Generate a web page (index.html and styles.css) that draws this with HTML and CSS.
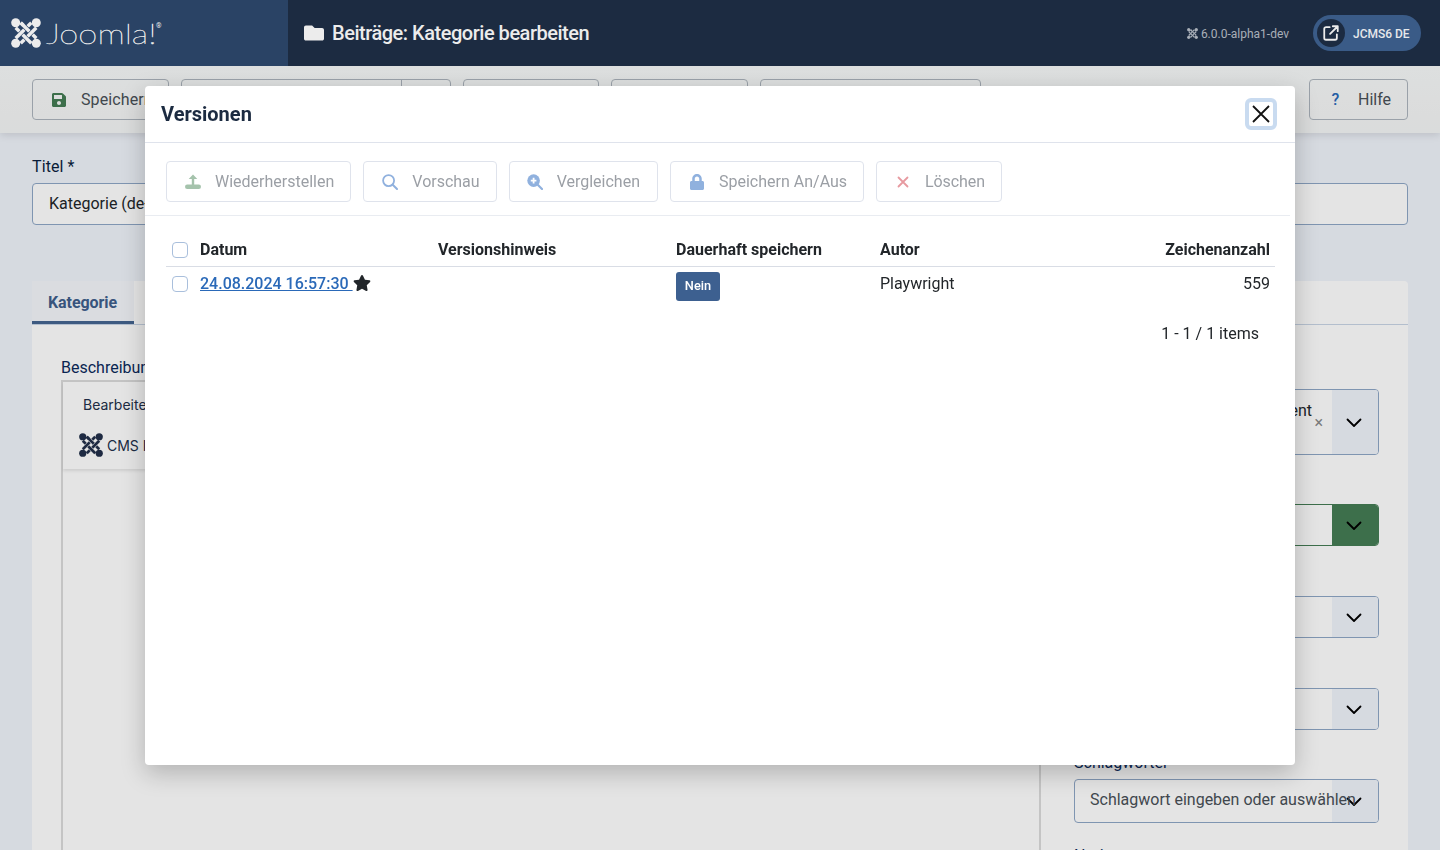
FILE: index.html
```html
<!DOCTYPE html>
<html lang="de">
<head>
<meta charset="utf-8">
<title>Beiträge: Kategorie bearbeiten</title>
<link rel="stylesheet" href="styles.css">
</head>
<body>
<svg class="defs" width="0" height="0" aria-hidden="true">
  <symbol id="joomla" viewBox="0 0 30 30">
    <g fill="none">
      <path class="gap" d="M9.700 4.700 25.300 20.300"/><path class="band" d="M9.700 4.700 25.300 20.300"/>
      <path class="gap" d="M25.300 9.700 9.700 25.300"/><path class="band" d="M25.300 9.700 9.700 25.300"/>
      <path class="gap" d="M4.700 9.700 20.300 25.300"/><path class="band" d="M4.700 9.700 20.300 25.300"/>
      <path class="gap" d="M20.300 4.700 4.700 20.300"/><path class="band" d="M20.300 4.700 4.700 20.300"/>
      <path class="gap" d="M12.500 7.500 17.500 12.500"/><path class="band" d="M9.700 4.700 18 13"/>
    </g>
    <g fill="currentColor">
      <circle cx="4.700" cy="4.700" r="4.500"/><circle cx="25.300" cy="4.700" r="4.500"/>
      <circle cx="4.700" cy="25.300" r="4.500"/><circle cx="25.300" cy="25.300" r="4.500"/>
    </g>
  </symbol>
  <symbol id="chev" viewBox="0 0 16 16">
    <path d="M1.500 4.500 8 11l6.500-6.500" fill="none" stroke="currentColor" stroke-width="1.800" stroke-linecap="round" stroke-linejoin="round"/>
  </symbol>
</svg>

<div class="page">
  <header class="topbar">
    <div class="brand">
      <svg class="brand-mark"><use href="#joomla"/></svg>
      <span class="brand-word">Joomla!</span><sup class="brand-reg">®</sup>
    </div>
    <div class="titlebar">
      <svg class="folder" viewBox="0 0 512 512"><path fill="currentColor" d="M464 128H272l-64-64H48C21.490 64 0 85.490 0 112v288c0 26.510 21.490 48 48 48h416c26.510 0 48-21.490 48-48V176c0-26.510-21.490-48-48-48z"/></svg>
      <h1>Beiträge: Kategorie bearbeiten</h1>
    </div>
    <div class="status">
      <span class="version"><svg class="version-mark"><use href="#joomla"/></svg>6.0.0-alpha1-dev</span>
      <span class="site-pill">
        <span class="site-icon">
          <svg viewBox="0 0 20 20" width="20" height="20" fill="none" stroke="currentColor" stroke-width="2" stroke-linecap="round" stroke-linejoin="round"><path d="M8.500 3.500H4.500a2 2 0 0 0-2 2v10a2 2 0 0 0 2 2h10a2 2 0 0 0 2-2v-4"/><path d="M9 11 17.500 2.500M12 2.500h5.500V8"/></svg>
        </span>
        <span class="site-name">JCMS6 DE</span>
      </span>
    </div>
  </header>

  <nav class="toolbar">
    <button class="tbtn tbtn-save"><svg class="save" viewBox="0 0 448 512"><path fill="currentColor" d="M433.941 129.941l-83.882-83.882A48 48 0 0 0 316.118 32H48C21.490 32 0 53.490 0 80v352c0 26.510 21.490 48 48 48h352c26.510 0 48-21.490 48-48V163.882a48 48 0 0 0-14.059-33.941zM224 416c-35.346 0-64-28.654-64-64 0-35.346 28.654-64 64-64s64 28.654 64 64c0 35.346-28.654 64-64 64zm96-304.520V212c0 6.627-5.373 12-12 12H76c-6.627 0-12-5.373-12-12V108c0-6.627 5.373-12 12-12h228.520c3.183 0 6.235 1.264 8.485 3.515l3.480 3.480A11.996 11.996 0 0 1 320 111.480z"/></svg>Speichern</button>
    <div class="tbtn tbtn-split"><span class="split-main"></span><span class="split-arrow"></span></div>
    <button class="tbtn tbtn-c"></button>
    <button class="tbtn tbtn-d"></button>
    <button class="tbtn tbtn-e"></button>
    <button class="tbtn tbtn-help"><span class="help-mark">?</span>Hilfe</button>
  </nav>

  <main class="content">
    <label class="lbl-title">Titel *</label>
    <div class="title-input">Kategorie (de-DE)</div>
    <section class="panel">
      <div class="tabs"><span class="tab">Kategorie</span></div>
      <div class="panel-body">
        <div class="col-main">
          <label class="lbl">Beschreibung</label>
          <div class="editor">
            <div class="ed-toolbar">
              <div class="ed-menu">Bearbeiten</div>
              <div class="ed-cms"><svg class="ed-mark"><use href="#joomla"/></svg>CMS Inhalt</div>
            </div>
          </div>
        </div>
        <aside class="col-side">
          <div class="sel sel-tall"><span class="sel-text sel-tag">Parent<span class="tag-x">×</span></span><span class="sel-arrow"><svg><use href="#chev"/></svg></span></div>
          <div class="sel sel-green"><span class="sel-text"></span><span class="sel-arrow"><svg><use href="#chev"/></svg></span></div>
          <div class="sel sel-plain"><span class="sel-text"></span><span class="sel-arrow"><svg><use href="#chev"/></svg></span></div>
          <div class="sel sel-plain"><span class="sel-text"></span><span class="sel-arrow"><svg><use href="#chev"/></svg></span></div>
          <label class="lbl lbl-tags">Schlagwörter</label>
          <div class="sel sel-tags"><span class="sel-text">Schlagwort eingeben oder auswählen</span><span class="sel-arrow"><svg><use href="#chev"/></svg></span></div>
          <label class="lbl lbl-note">Notiz</label>
        </aside>
      </div>
    </section>
  </main>
</div>

<div class="backdrop"></div>

<div class="modal" role="dialog" aria-label="Versionen">
  <div class="modal-head">
    <h2>Versionen</h2>
    <button class="close" aria-label="Schließen"><svg viewBox="0 0 18 18" width="18" height="18"><path d="M1 1l16 16M17 1 1 17" stroke="currentColor" stroke-width="1.800" fill="none"/></svg></button>
  </div>
  <div class="modal-tools">
    <button class="mbtn"><svg class="mi mi-green" viewBox="0 0 16 16"><path fill="currentColor" d="M8 .5 12.300 5H9.200v6.500H6.800V5H3.700z"/><rect fill="currentColor" x="0" y="10.500" width="16" height="4.500" rx="2.200"/></svg>Wiederherstellen</button>
    <button class="mbtn"><svg class="mi mi-blue" viewBox="0 0 16 16"><circle cx="6.600" cy="6.600" r="5.500" fill="none" stroke="currentColor" stroke-width="1.800"/><path d="M10.700 10.700 15 15" stroke="currentColor" stroke-width="2" stroke-linecap="round"/></svg>Vorschau</button>
    <button class="mbtn mbtn-cmp"><svg class="mi mi-blue" viewBox="0 0 16 16"><circle cx="6.600" cy="6.600" r="6.300" fill="currentColor"/><path d="M10.700 10.700 15 15" stroke="currentColor" stroke-width="2.200" stroke-linecap="round"/><path d="M6.600 3.800v5.600M3.800 6.600h5.600" stroke="#fff" stroke-width="1.800"/></svg>Vergleichen</button>
    <button class="mbtn"><svg class="mi mi-blue" viewBox="0 0 448 512"><path fill="currentColor" d="M400 224h-24v-72C376 68.200 307.800 0 224 0S72 68.200 72 152v72H48c-26.500 0-48 21.500-48 48v192c0 26.500 21.500 48 48 48h352c26.500 0 48-21.500 48-48V272c0-26.500-21.500-48-48-48zm-104 0H152v-72c0-39.700 32.300-72 72-72s72 32.300 72 72v72z"/></svg>Speichern An/Aus</button>
    <button class="mbtn mbtn-del"><svg class="mi mi-red" viewBox="0 0 16 16"><path d="M3.500 3.500l9 9M12.500 3.500l-9 9" stroke="currentColor" stroke-width="1.800" stroke-linecap="round"/></svg>Löschen</button>
  </div>
  <div class="modal-body">
    <table class="versions">
      <thead>
        <tr>
          <th class="c-check"><span class="check"></span></th>
          <th class="c-date">Datum</th>
          <th class="c-note">Versionshinweis</th>
          <th class="c-keep">Dauerhaft speichern</th>
          <th class="c-author">Autor</th>
          <th class="c-count">Zeichenanzahl</th>
        </tr>
      </thead>
      <tbody>
        <tr>
          <td class="c-check"><span class="check"></span></td>
          <td class="c-date"><a href="#">24.08.2024 16:57:30 </a><svg class="star" viewBox="0 0 576 512"><path fill="currentColor" d="M259.300 17.800L194 150.200 47.900 171.500c-26.200 3.800-36.700 36.100-17.700 54.600l105.700 103-25 145.500c-4.500 26.300 23.200 46 46.400 33.700L288 439.600l130.700 68.700c23.200 12.200 50.900-7.400 46.400-33.700l-25-145.500 105.700-103c19-18.500 8.500-50.800-17.700-54.600L382 150.200 316.700 17.800c-11.700-23.600-45.600-23.900-57.400 0z"/></svg></td>
          <td></td>
          <td><span class="badge">Nein</span></td>
          <td>Playwright</td>
          <td class="c-count">559</td>
        </tr>
      </tbody>
    </table>
    <div class="pager">1 - 1 / 1 items</div>
  </div>
</div>
</body>
</html>
```

FILE: styles.css
```css
* { box-sizing: border-box; }
html, body { margin: 0; height: 100%; overflow: hidden; }
body { background: #f0f4fb; font-family: Roboto, "Liberation Sans", sans-serif; font-size: 16px; color: #22262a; }
.defs { display: block; height: 0; }
button { font: inherit; }

.page { height: 850px; overflow: hidden; display: flex; flex-direction: column; }

.topbar { position: relative; z-index: 5; flex: 0 0 66px; display: flex; align-items: center; background: #1c2b41; color: #fff; }
.brand { width: 288px; height: 66px; background: #2a4365; display: flex; align-items: center; padding-left: 11px; color: #ececec; --gap: #2a4365; }
.gap { stroke: var(--gap); stroke-width: 4.600; }
.band { stroke: currentColor; stroke-width: 3.400; }
.brand-mark { width: 30px; height: 30px; margin-right: 5px; }
.brand-word { font-family: Lato, "Liberation Sans", sans-serif; font-weight: 100; font-size: 27px; line-height: 1; transform: scaleX(1.280); transform-origin: left; width: 112px; -webkit-text-stroke: .4px #ececec; }
.brand-reg { font-size: 7px; align-self: flex-start; margin: 23px 0 0 -2px; line-height: 1; }
.titlebar { display: flex; align-items: center; padding-left: 16px; color: #ececec; flex: 1; }
.folder { width: 20px; height: 20px; margin-right: 8px; }
h1 { margin: 0; font-size: 20px; font-weight: 500; letter-spacing: -.48px; line-height: 1; }
.status { display: flex; align-items: center; padding-right: 19px; }
.version { display: flex; align-items: center; font-size: 12px; color: #a9afb8; margin-right: 24px; padding-top: 1px; --gap: #1c2b41; }
.version-mark { width: 11px; height: 11px; margin-right: 3px; }
.site-pill { display: flex; align-items: center; width: 108px; height: 36px; border-radius: 18px; background: #3a5b87; padding-left: 4px; }
.site-icon { width: 28px; height: 28px; border-radius: 50%; background: #1c2b41; display: flex; align-items: center; justify-content: center; color: #ececec; }
.site-icon svg { width: 18px; height: 18px; }
.site-name { font-size: 12px; font-weight: 500; margin-left: 8px; padding-top: 1px; color: #e6e8eb; letter-spacing: -.03px; }

.toolbar { position: relative; flex: 0 0 67px; display: flex; gap: 12px; padding: 13px 32px 0; background: linear-gradient(#f8fafa, #f4f6f6); box-shadow: 0 2px 8px rgba(0,0,0,.12); }
.tbtn { height: 41px; border: 1px solid #adb5bd; border-radius: 4px; background: transparent; color: #495057; padding: 0; display: flex; align-items: center; font-size: 16px; overflow: hidden; white-space: nowrap; }
.tbtn-save { width: 137px; padding-left: 19px; letter-spacing: .1px; }
.save { width: 14px; height: 16px; color: #457d54; margin-right: 15px; }
.tbtn-split { width: 270px; }
.split-main { flex: 1; height: 100%; border-right: 1px solid #adb5bd; }
.split-arrow { width: 48px; }
.tbtn-c { width: 136px; }
.tbtn-d { width: 137px; }
.tbtn-e { width: 221px; }
.tbtn-help { width: 99px; margin-left: auto; padding-left: 20px; }
.help-mark { color: #2a69b8; font-weight: 500; width: 11px; margin-right: 17px; }

.content { flex: 1; min-height: 0; padding: 24px 32px 0; }
.lbl-title { display: block; font-size: 16px; line-height: 19px; color: #0b1f3f; letter-spacing: .1px; }
.title-input { height: 42px; margin-top: 7px; border: 1px solid #8ea7c6; border-radius: 4px; background: #fff; padding: 0 16px 2px; display: flex; align-items: center; color: #22262a; }

.panel { margin-top: 56px; background: #fff; height: 700px; border-radius: 4px 4px 0 0; }
.tabs { height: 44px; border-bottom: 1px solid #c9d5e6; }
.tab { display: flex; width: 102px; height: 43px; align-items: center; justify-content: center; background: #f4f7fb; border-bottom: 3px solid #456591; color: #3f5f8c; font-weight: 700; font-size: 16px; letter-spacing: -.08px; padding: 3px 1px 0 0; }
.panel-body { display: flex; padding: 33px 29px 0; gap: 33px; }
.col-main { width: 980px; }
.lbl { display: block; color: #0b2a5b; font-size: 16px; line-height: 19px; }
.editor { margin-top: 3px; height: 640px; border: 2px solid #dcdcdc; }
.ed-toolbar { height: 87px; box-shadow: 0 2px 3px rgba(0,0,0,.1); font-family: Inter, "Liberation Sans", sans-serif; font-size: 14px; color: #22304a; padding: 14px 0 0 20px; }
.ed-menu { line-height: 17px; }
.ed-cms { display: flex; align-items: center; margin: 20px 0 0 -4px; --gap: #fff; color: #22304a; }
.ed-mark { width: 24px; height: 24px; margin-right: 4px; }

.col-side { width: 305px; padding-top: 31px; flex: none; }
.sel { display: flex; border: 1px solid #8ea7c6; border-radius: 4px; background: #fff; overflow: hidden; }
.sel-text { flex: 1; min-width: 0; padding: 0 16px; display: flex; align-items: center; color: #495057; white-space: nowrap; }
.sel-arrow { flex: 0 0 46px; background: #f0f4fb; display: flex; align-items: center; justify-content: center; color: #000; padding: 1px 2px 0 0; }
.sel-arrow svg { width: 16px; height: 16px; }
.sel-tall { height: 66px; }
.sel-tag { justify-content: flex-end; padding: 11px 20px 0 0; color: #22262a; position: relative; align-items: flex-start; }
.tag-x { position: absolute; right: 9px; top: 26px; color: #8a8a8a; font-size: 16px; line-height: 14px; }
.sel-green { height: 42px; margin-top: 49px; border-color: #457d54; }
.sel-green .sel-arrow { background: #457d54; }
.sel-plain { height: 42px; margin-top: 50px; }
.lbl-tags { margin-top: 23px; }
.sel-tags { height: 44px; margin-top: 7px; overflow: visible; }
.sel-tags .sel-text { position: relative; z-index: 1; padding: 0 0 4px 15px; }
.sel-tags .sel-arrow { border-radius: 0 3px 3px 0; }
.lbl-note { margin-top: 23px; }

.backdrop { position: fixed; inset: 0; z-index: 3; background: rgba(0,0,0,.105); }

.modal { position: fixed; z-index: 10; left: 145px; top: 86px; width: 1150px; height: 679px; background: #fff; border-radius: 4px; box-shadow: 0 8px 24px rgba(0,0,0,.22); display: flex; flex-direction: column; }
.modal-head { flex: 0 0 57px; display: flex; align-items: center; justify-content: space-between; padding: 0 18px 0 16px; border-bottom: 1px solid #dfe3ec; }
h2 { margin: 0; font-size: 20px; font-weight: 700; color: #1c2b41; }
.close { width: 32px; height: 32px; border: 4px solid #c9dbf0; border-radius: 6px; background: #fff; padding: 0; display: flex; align-items: center; justify-content: center; color: #111; }
.modal-tools { flex: 0 0 72px; display: flex; gap: 12px; padding: 18px 21px 0; }
.mbtn { height: 41px; padding: 0 16px 0 18px; border: 1px solid #dfe3ec; border-radius: 4px; background: #fff; color: #9b9fa5; display: flex; align-items: center; font-size: 16px; white-space: nowrap; }
.mbtn-del { letter-spacing: -.1px; }
.mbtn-cmp { padding-left: 17px; padding-right: 17px; }
.mi { width: 16px; height: 16px; margin-right: 14px; flex: none; }
.mi-green { color: #a5c3ac; }
.mi-blue { color: #90b1de; }
.mi-red { color: #e79aa0; }
.modal-body { border-top: 1px solid #e9ecf1; margin: 0 5px 0 0; flex: 1; padding: 19px 0 0 21px; }
.versions { width: 1109px; table-layout: fixed; border-collapse: collapse; font-size: 16px; color: #22262a; }
.versions th { font-weight: 700; text-align: left; height: 31px; padding: 0 4px 2px; border-bottom: 1px solid #d9dde5; }
.versions td { vertical-align: top; padding: 7px 4px 0; line-height: 20px; height: 47px; }
.c-check { width: 30px; padding-left: 6px !important; padding-right: 0 !important; }
.c-date { width: 238px; }
.c-note { width: 238px; }
.c-keep { width: 204px; }
.c-author { width: 204px; }
.versions .c-count { text-align: right; padding-right: 5px; }
.check { display: block; width: 16px; height: 16px; border: 1px solid #a9bfdc; border-radius: 4px; background: #fff; margin-top: 2px; }
a { color: #2a69b8; font-weight: 500; }
.star { width: 18px; height: 16px; color: #22262a; vertical-align: -2px; }
.badge { display: inline-block; margin-top: -2px; width: 44px; height: 29px; border-radius: 3px; background: #3d6090; color: #fff; font-size: 12.800px; font-weight: 500; line-height: 27px; text-align: center; }
.pager { width: 1093px; text-align: right; margin-top: 11px; line-height: 20px; }
```
